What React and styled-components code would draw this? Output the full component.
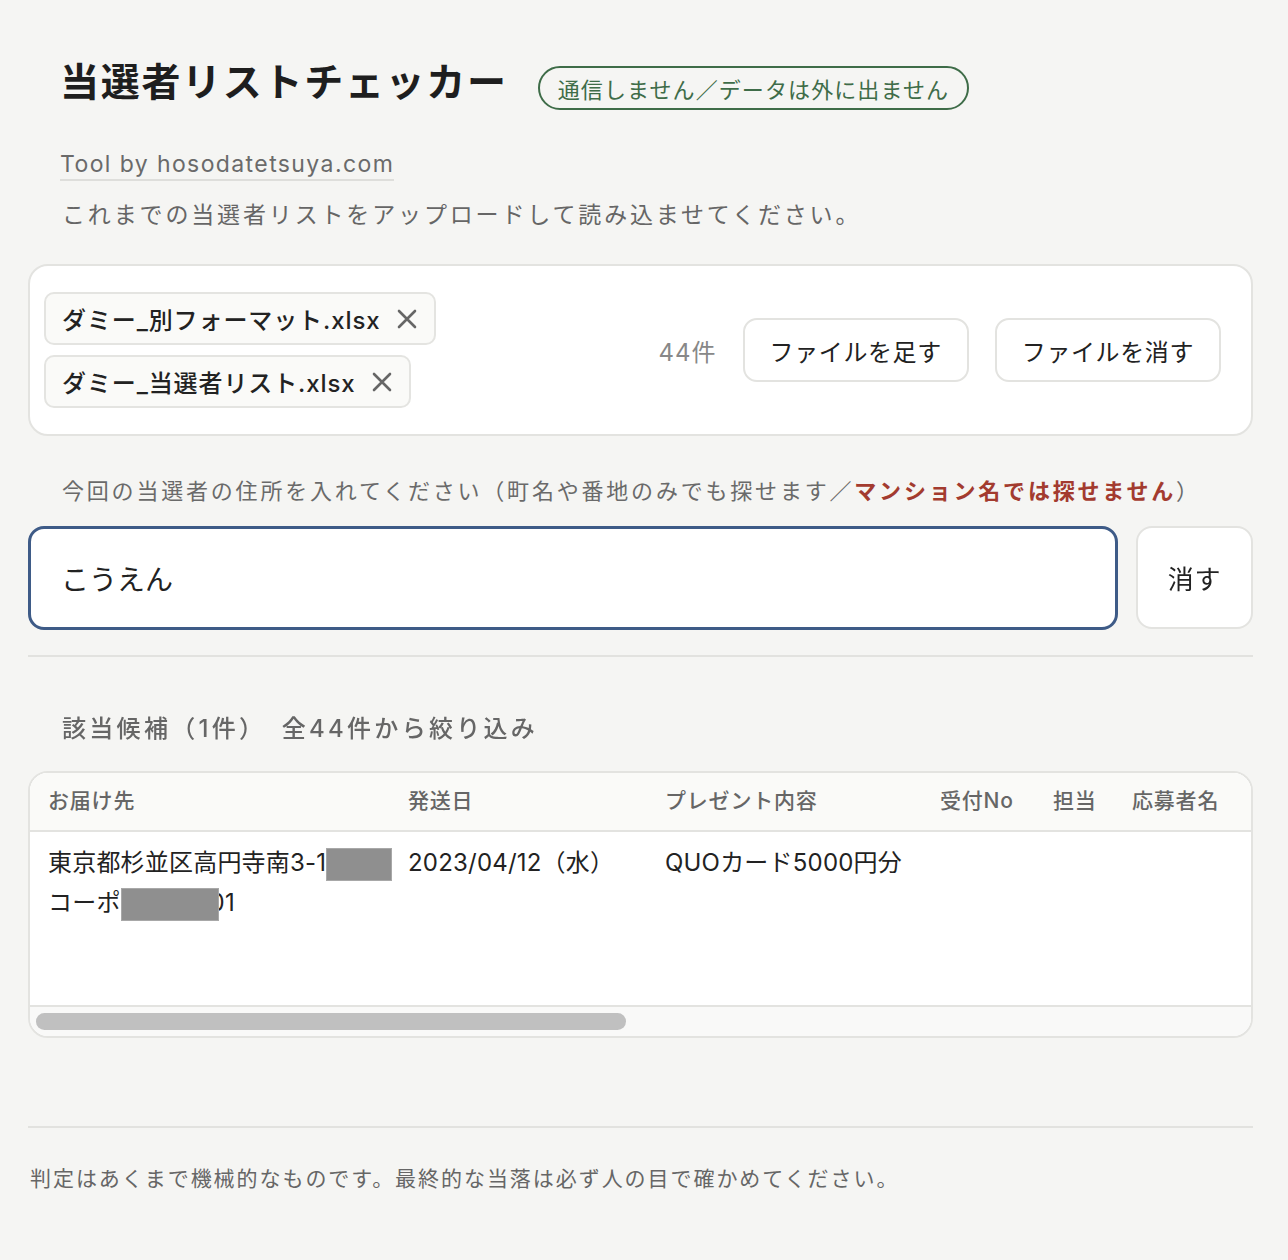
import React, { useState } from "react"
import styled, { createGlobalStyle } from "styled-components"

const GlobalStyle = createGlobalStyle`
body {
    margin: 0;
    background: #f5f5f3;
    color: #222;
    font-family: "Inter", "Noto Sans CJK JP", sans-serif;
}
* { box-sizing: border-box; }
`

const Page = styled.main`
width: 1225px;
margin-left: 28px;
padding-top: 59px;
padding-bottom: 60px;
`

const Intro = styled.section`
padding-left: 34px;
`

const TitleRow = styled.div`
display: flex;
align-items: flex-start;
gap: 30px;
`

const Title = styled.h1`
margin: 0;
margin-left: -2px;
font-size: 39px;
line-height: 46px;
font-weight: 700;
letter-spacing: 1.7px;
color: #1e1e1e;
`

const Badge = styled.span`
margin-top: 7px;
height: 44px;
display: inline-flex;
align-items: center;
padding: 0 18px;
border: 2px solid #3e6c48;
border-radius: 22px;
color: #3e6c48;
font-size: 22px;
letter-spacing: 1.1px;
`

const ToolLink = styled.a`
display: inline-block;
margin-top: 39px;
margin-left: -2px;
font-size: 23px;
line-height: 30px;
letter-spacing: 1.4px;
color: #6a6a6a;
text-decoration: none;
border-bottom: 2px solid #dededb;
`

const Lead = styled.p`
margin: 18px 0 0;
font-size: 23px;
line-height: 32px;
letter-spacing: 2.85px;
color: #666;
`

const Card = styled.div`
margin-top: 33px;
background: #fff;
border: 2px solid #e3e3e0;
border-radius: 20px;
padding: 26px 30px 26px 14px;
display: flex;
align-items: center;
justify-content: space-between;
`

const ChipList = styled.div`
display: flex;
flex-direction: column;
align-items: flex-start;
gap: 10px;
`

const Chip = styled.div`
height: 53px;
display: flex;
align-items: center;
gap: 16px;
padding: 0 17px 0 16px;
background: #fafaf8;
border: 2px solid #e4e4e1;
border-radius: 10px;
font-size: 24px;
font-weight: 500;
letter-spacing: 0.9px;
color: #222;
`

const Remove = styled.button`
border: 0;
background: none;
padding: 0;
display: flex;
color: #666;
cursor: pointer;
`

const Actions = styled.div`
display: flex;
align-items: center;
gap: 26px;
`

const Count = styled.span`
font-size: 24px;
letter-spacing: 1px;
color: #888;
`

const Button = styled.button`
height: ${(p) => p.$tall ? "103px" : "64px"};
padding: 0 ${(p) => p.$tall ? "30px" : "25px"};
background: #fff;
border: 2px solid #e3e3e0;
border-radius: ${(p) => p.$tall ? "16px" : "14px"};
font-family: inherit;
font-size: ${(p) => p.$tall ? "26px" : "24px"};
letter-spacing: 0.6px;
color: #222;
cursor: pointer;
`

const Label = styled.p`
margin: 39px 0 0;
padding-left: 34px;
font-size: 22px;
line-height: 32px;
letter-spacing: 2.8px;
color: #6a6a6a;
`

const Warn = styled.strong`
color: #a33b2f;
font-weight: 700;
`

const SearchRow = styled.div`
margin-top: 19px;
display: flex;
gap: 18px;
`

const SearchInput = styled.input`
flex: 1;
height: 104px;
padding: 0 30px;
border: 3px solid #3e5b87;
border-radius: 16px;
background: #fff;
font-family: inherit;
font-size: 28px;
color: #222;
outline: none;
caret-color: #222;
`

const Divider = styled.hr`
margin: ${(p) => p.$gap || "25px 0 0"};
border: 0;
border-top: 2px solid #e2e2df;
`

const ResultHead = styled.h2`
margin: 56px 0 0;
padding-left: 34px;
font-size: 24px;
line-height: 32px;
font-weight: 500;
letter-spacing: 3.3px;
color: #666;
`

const TableCard = styled.div`
margin-top: 26px;
border: 2px solid #e3e3e0;
border-radius: 20px;
background: #fff;
overflow: hidden;
`

const Table = styled.table`
width: 100%;
table-layout: fixed;
border-collapse: collapse;
background: #fff;
`

const Th = styled.th`
height: 58px;
padding: 0 0 5px 18px;
background: #fafaf8;
border-bottom: 2px solid #e3e3e0;
text-align: left;
white-space: nowrap;
font-size: 21px;
font-weight: 500;
letter-spacing: 0.8px;
color: #666;
`

const Row = styled.tr`
height: 175px;
border-bottom: 2px solid #e3e3e0;
`

const Td = styled.td`
vertical-align: top;
padding: 11px 0 0 18px;
font-size: 24px;
line-height: 40px;
letter-spacing: 0.2px;
color: #222;
white-space: nowrap;
`

const Redact = styled.span`
position: relative;
z-index: 1;
display: inline-block;
vertical-align: middle;
width: ${(p) => p.$w}px;
height: 33px;
margin-right: ${(p) => p.$overlap || 0}px;
background: #8f8f8f;
border: 1px solid #a8a8a8;
`

const ScrollTrack = styled.div`
height: 29px;
padding: 6px 6px;
background: #f9f9f8;
`

const ScrollThumb = styled.div`
height: 17px;
border-radius: 9px;
background: #c0c0c0;
`

const Footer = styled.footer`
margin-top: 88px;
`

const Note = styled.p`
margin: 36px 0 0 2px;
font-size: 21px;
line-height: 30px;
letter-spacing: 1.95px;
color: #666;
`

const columns = [
    ["お届け先", 360],
    ["発送日", 257],
    ["プレゼント内容", 275],
    ["受付No", 113],
    ["担当", 79],
    ["応募者名", null],
]

const visibleRatio = 1221 / 2500

const files = ["ダミー_別フォーマット.xlsx", "ダミー_当選者リスト.xlsx"]

const CloseIcon = () => (
    <svg width="20" height="20" viewBox="0 0 20 20" fill="none" stroke="currentColor" strokeWidth="2.6" strokeLinecap="round">
        <path d="M2 2 L18 18 M18 2 L2 18" />
    </svg>
)

const App = () => {
    const [query, setQuery] = useState("こうえん")

    return (
        <>
            <GlobalStyle />
            <Page>
                <Intro>
                    <TitleRow>
                        <Title>当選者リストチェッカー</Title>
                        <Badge>通信しません／データは外に出ません</Badge>
                    </TitleRow>
                    <ToolLink href="#">Tool by hosodatetsuya.com</ToolLink>
                    <Lead>これまでの当選者リストをアップロードして読み込ませてください。</Lead>
                </Intro>

                <Card>
                    <ChipList>
                        {files.map((f) => (
                            <Chip key={f}>
                                {f}
                                <Remove aria-label="削除"><CloseIcon /></Remove>
                            </Chip>
                        ))}
                    </ChipList>
                    <Actions>
                        <Count>44件</Count>
                        <Button>ファイルを足す</Button>
                        <Button>ファイルを消す</Button>
                    </Actions>
                </Card>

                <Label>
                    今回の当選者の住所を入れてください（町名や番地のみでも探せます／<Warn>マンション名では探せません</Warn>）
                </Label>
                <SearchRow>
                    <SearchInput autoFocus value={query} onChange={(e) => setQuery(e.target.value)} />
                    <Button $tall onClick={() => setQuery("")}>消す</Button>
                </SearchRow>
                <Divider />

                <ResultHead>該当候補（1件）　全44件から絞り込み</ResultHead>
                <TableCard>
                    <Table>
                        <colgroup>
                            {columns.map(([name, w]) => <col key={name} style={w ? { width: w } : undefined} />)}
                        </colgroup>
                        <thead>
                            <tr>
                                {columns.map(([name]) => <Th key={name}>{name}</Th>)}
                            </tr>
                        </thead>
                        <tbody>
                            <Row>
                                <Td>
                                    東京都杉並区高円寺南3-1<Redact $w={66} /><br />
                                    コーポ<Redact $w={98} $overlap={-9} />01
                                </Td>
                                <Td>2023/04/12（水）</Td>
                                <Td>QUOカード5000円分</Td>
                                <Td />
                                <Td />
                                <Td />
                            </Row>
                        </tbody>
                    </Table>
                    <ScrollTrack>
                        <ScrollThumb style={{ width: `${visibleRatio * 100}%` }} />
                    </ScrollTrack>
                </TableCard>

                <Footer>
                    <Divider $gap="0" />
                    <Note>判定はあくまで機械的なものです。最終的な当落は必ず人の目で確かめてください。</Note>
                </Footer>
            </Page>
        </>
    )
}

export default App
